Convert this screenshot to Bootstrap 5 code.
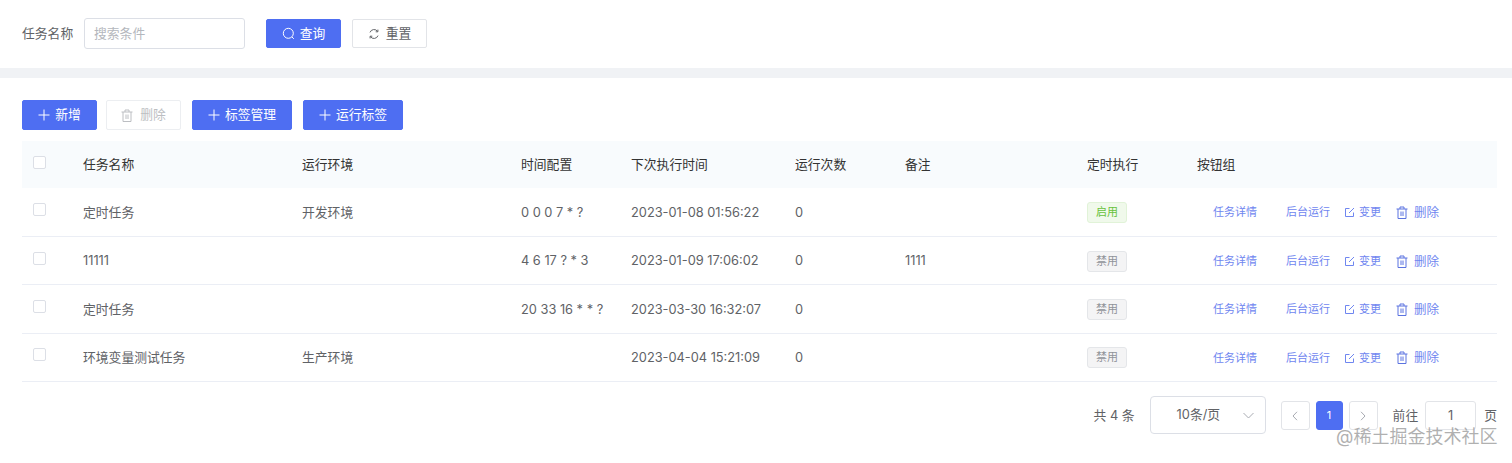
<!DOCTYPE html>
<html lang="zh-CN">
<head>
  <meta charset="UTF-8" />
  <meta name="viewport" content="width=device-width, initial-scale=1.0" />
  <title>定时任务</title>
  <link href="https://cdn.jsdelivr.net/npm/bootstrap@5.3.3/dist/css/bootstrap.min.css" rel="stylesheet" />
  <style>
    body {
      font-family: Inter, "Noto Sans CJK SC", sans-serif;
      font-size: 12.8px;
      color: #606266;
      background: #fff;
      height: 463px;
      overflow: hidden;
    }
    svg { flex: none; }
    .search-bar { height: 68px; padding: 18px 22px 0; }
    .search-label { width: 62px; line-height: 31px; }
    .search-input {
      width: 161px; height: 31px; font-size: 12.8px; padding: 0 9px;
      border: 1px solid #dcdfe6; border-radius: 3px; color: #606266;
    }
    .search-input::placeholder { color: #b4b7bd; }
    .band { height: 10px; background: #f0f2f5; }
    .main-area { padding: 22px 15px 0 22px; }
    .act-btn {
      height: 30px; font-size: 12.8px; padding: 0; border-radius: 2px;
      display: inline-flex; align-items: center; justify-content: center; gap: 5px;
      border: 1px solid #4e6ef2; background: #4e6ef2; color: #fff;
    }
    .act-btn:hover { background: #4e6ef2; border-color: #4e6ef2; color: #fff; }
    .act-plain { background: #fff; border-color: #e2e4e8; color: #606266; gap: 6px; }
    .act-off { background: #fff; border-color: #eceef1; color: #bcbec2; gap: 7px; }
    .act-search { height: 29px; margin-top: 1px; }
    .w-75px { width: 75px; }
    .w-100px { width: 100px; }
    .gap-search { margin-left: 21px; }
    .gap-reset { margin-left: 11px; }
    .gap-del { margin-left: 9px; }
    .gap-tool { margin-left: 11px; }
    .task-table { table-layout: fixed; width: 1475px; margin: 11px 0 0; font-size: 12.8px; }
    .task-table th, .task-table td {
      padding: 0 12px; vertical-align: middle; border-bottom: 1px solid #ebeef5;
      color: #606266; font-weight: 400; white-space: nowrap; box-shadow: none;
    }
    .task-table th { height: 47px; background: #f8fbfd; color: #333; border-bottom: 0; }
    .task-table td { height: 48.4px; padding-top: 1px; }
    .c-check { width: 49px; }
    .c-name, .c-env { width: 219px; }
    .c-cron { width: 110px; }
    .c-next { width: 164px; }
    .c-count { width: 110px; }
    .c-note { width: 182px; }
    .c-switch { width: 110px; }
    .task-table .check-cell { padding: 0 0 5px 11px; }
    .fake-check {
      display: block; width: 13px; height: 13px; border: 1px solid #dcdfe6;
      border-radius: 2px; background: #fff;
    }
    .state {
      display: inline-block; width: 40px; height: 21px; line-height: 19px; text-align: center;
      font-size: 11px; border-radius: 3px; border: 1px solid #e4e6e9; background: #f4f4f5; color: #909399;
    }
    .state-on { background: #f0f9eb; border-color: #e1f3d8; color: #67c23a; }
    .task-table .ops { padding-left: 28px; font-size: 11px; }
    .ops-line { color: #6f86f0; }
    .op-a { width: 73px; }
    .op-b { width: 59px; }
    .op-c { width: 51px; gap: 4px; }
    .op-d { gap: 6px; font-size: 12.5px; }
    .op-d svg { stroke: #5b73e0; }
    .op-d span { padding-top: 2px; }
    .pager { height: 52px; padding-top: 14px; }
    .page-text { line-height: 29px; margin-top: 5px; }
    .page-total { margin-right: 15px; }
    .page-size {
      width: 116px; height: 38px; border: 1px solid #dcdfe6; border-radius: 4px; padding: 0 11px 0 26px;
      margin-right: 15px;
    }
    .page-btn {
      width: 29px; height: 29px; margin-top: 5px; border: 1px solid #e2e4e8; border-radius: 3px; color: #a8abb2;
      background: #fff;
    }
    .page-next { margin-left: 6px; }
    .page-on { width: 27px; margin-left: 6px; background: #4e6ef2; border-color: #4e6ef2; color: #fff; font-size: 11px; }
    .page-go { width: 51px; height: 29px; margin: 5px 8px 0 7px; border: 1px solid #e2e4e8; border-radius: 3px; color: #606266; }
    .page-goto { margin-left: 15px; }
    .watermark {
      position: absolute; left: 1336px; top: 425px; font-size: 18px; line-height: 24px;
      color: rgba(150, 150, 150, .75); white-space: nowrap;
    }
  </style>
</head>
<body>

  <div class="search-bar d-flex align-items-start">
    <span class="search-label">任务名称</span>
    <input type="text" class="search-input" placeholder="搜索条件" />
    <button type="button" class="btn act-btn act-search w-75px gap-search">
      <svg width="13" height="13" viewBox="0 0 13 13" fill="none" stroke="currentColor" stroke-width="1"><circle cx="6.3" cy="6.3" r="5"/><path d="M10 10l1.8 1.8"/></svg>查询
    </button>
    <button type="button" class="btn act-btn act-plain act-search w-75px gap-reset">
      <svg width="12" height="12" viewBox="0 0 12 12" fill="none" stroke="currentColor" stroke-width="1"><path d="M2 4.4A4.3 4.3 0 0 1 9.6 3.4M10 7.6A4.3 4.3 0 0 1 2.4 8.6"/><path d="M9.9 1.6v2.2H7.7M2.1 10.4V8.2h2.2"/></svg>重置
    </button>
  </div>
  <div class="band"></div>

  <div class="main-area">
    <div class="d-flex">
      <button type="button" class="btn act-btn w-75px">
        <svg width="12" height="12" viewBox="0 0 12 12" stroke="currentColor" stroke-width="1"><path d="M6 .5v11M.5 6h11"/></svg>新增
      </button>
      <button type="button" class="btn act-btn act-off w-75px gap-del">
        <svg width="12" height="13" viewBox="0 0 12 13" fill="none" stroke="currentColor" stroke-width="1"><path d="M.5 3h11M4 3V1h4v2M2 3v9.5h8V3M5 5.5v4.5M7 5.5v4.5"/></svg>删除
      </button>
      <button type="button" class="btn act-btn w-100px gap-tool">
        <svg width="12" height="12" viewBox="0 0 12 12" stroke="currentColor" stroke-width="1"><path d="M6 .5v11M.5 6h11"/></svg>标签管理
      </button>
      <button type="button" class="btn act-btn w-100px gap-tool">
        <svg width="12" height="12" viewBox="0 0 12 12" stroke="currentColor" stroke-width="1"><path d="M6 .5v11M.5 6h11"/></svg>运行标签
      </button>
    </div>

    <table class="table task-table" id="taskTable">
      <colgroup>
        <col class="c-check" /><col class="c-name" /><col class="c-env" /><col class="c-cron" />
        <col class="c-next" /><col class="c-count" /><col class="c-note" /><col class="c-switch" /><col />
      </colgroup>
      <thead>
        <tr>
          <th class="check-cell"><span class="fake-check"></span></th>
          <th>任务名称</th><th>运行环境</th><th>时间配置</th><th>下次执行时间</th><th>运行次数</th><th>备注</th><th>定时执行</th><th>按钮组</th>
        </tr>
      </thead>
      <tbody></tbody>
    </table>

    <div class="pager d-flex justify-content-end align-items-start">
      <span class="page-text page-total">共 4 条</span>
      <div class="page-size d-flex align-items-center justify-content-between">
        <span>10条/页</span>
        <svg width="11" height="7" viewBox="0 0 11 7" fill="none" stroke="#a8abb2"><path d="M.5 1l5 5 5-5"/></svg>
      </div>
      <div class="page-btn d-flex align-items-center justify-content-center">
        <svg width="6" height="10" viewBox="0 0 6 10" fill="none" stroke="currentColor"><path d="M5 .8L1 5l4 4.2"/></svg>
      </div>
      <div class="page-btn page-on d-flex align-items-center justify-content-center">1</div>
      <div class="page-btn page-next d-flex align-items-center justify-content-center">
        <svg width="6" height="10" viewBox="0 0 6 10" fill="none" stroke="currentColor"><path d="M1 .8L5 5 1 9.2"/></svg>
      </div>
      <span class="page-text page-goto">前往</span>
      <div class="page-go d-flex align-items-center justify-content-center">1</div>
      <span class="page-text">页</span>
    </div>
  </div>

  <div class="watermark">@稀土掘金技术社区</div>

  <script src="https://cdn.jsdelivr.net/npm/bootstrap@5.3.3/dist/js/bootstrap.bundle.min.js"></script>
  <script>
    const rows = [
      ["定时任务", "开发环境", "0 0 0 7 * ?", "2023-01-08 01:56:22", "0", "", true],
      ["11111", "", "4 6 17 ? * 3", "2023-01-09 17:06:02", "0", "1111", false],
      ["定时任务", "", "20 33 16 * * ?", "2023-03-30 16:32:07", "0", "", false],
      ["环境变量测试任务", "生产环境", "", "2023-04-04 15:21:09", "0", "", false]
    ];
    const editIcon = '<svg width="10" height="10" viewBox="0 0 10 10" fill="none" stroke="currentColor"><path d="M8.5 5.5v4h-8v-8h4M4 6l5-5"/></svg>';
    const trashIcon = '<svg width="12" height="13" viewBox="0 0 12 13" fill="none" stroke="currentColor"><path d="M.5 3h11M4 3V1h4v2M2 3v9.5h8V3M5 5.5v4.5M7 5.5v4.5"/></svg>';
    document.querySelector("#taskTable tbody").innerHTML = rows.map(r => `
      <tr>
        <td class="check-cell"><span class="fake-check"></span></td>
        <td>${r[0]}</td><td>${r[1]}</td><td>${r[2]}</td><td>${r[3]}</td><td>${r[4]}</td><td>${r[5]}</td>
        <td><span class="state ${r[6] ? "state-on" : ""}">${r[6] ? "启用" : "禁用"}</span></td>
        <td class="ops"><div class="ops-line d-flex align-items-center">
          <span class="op-a">任务详情</span><span class="op-b">后台运行</span>
          <span class="op-c d-flex align-items-center">${editIcon}变更</span>
          <span class="op-d d-flex align-items-center">${trashIcon}<span>删除</span></span>
        </div></td>
      </tr>`).join("");
  </script>
</body>
</html>
